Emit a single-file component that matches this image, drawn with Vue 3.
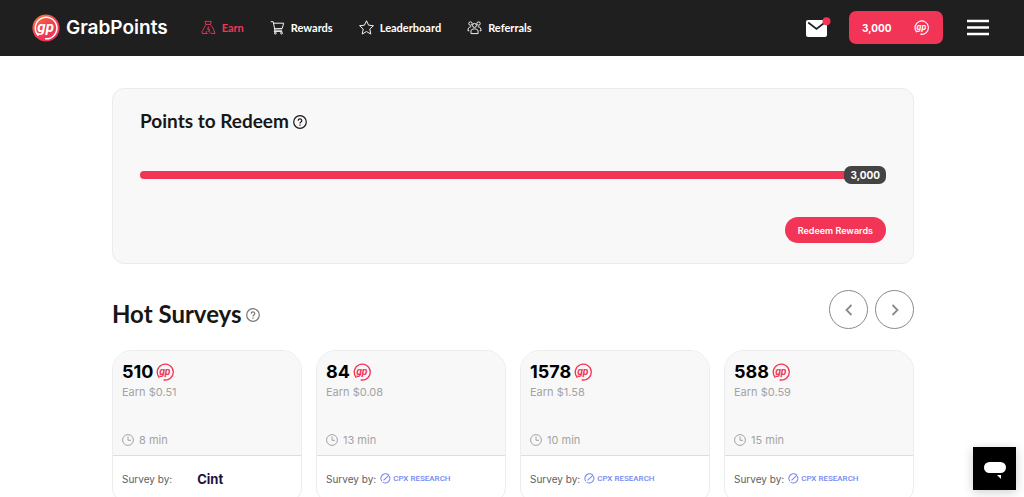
<script setup>
import { h } from 'vue'

const surveys = [
  { points: 510, earn: '$0.51', minutes: 8, provider: 'Cint' },
  { points: 84, earn: '$0.08', minutes: 13, provider: 'CPX RESEARCH' },
  { points: 1578, earn: '$1.58', minutes: 10, provider: 'CPX RESEARCH' },
  { points: 588, earn: '$0.59', minutes: 15, provider: 'CPX RESEARCH' },
]

const balance = 3000
const goal = 3000

// Ring with an opening at the lower left and the italic monogram inside.
const Coin = () =>
  h('svg', { viewBox: '0 0 20 20', 'aria-hidden': 'true' }, [
    h('path', {
      d: 'M3.4 15.8A8.9 8.9 0 1 1 8.6 18.9H10.5',
      fill: 'none',
      stroke: 'currentColor',
      'stroke-width': 1.5,
      'stroke-linecap': 'round',
    }),
    h(
      'text',
      {
        x: 9.8,
        y: 13,
        'text-anchor': 'middle',
        fill: 'currentColor',
        'font-family': 'Roboto, sans-serif',
        'font-size': 11.5,
        'font-weight': 700,
        'font-style': 'italic',
      },
      'gp',
    ),
  ])

const Help = () =>
  h('svg', { viewBox: '0 0 14 14', fill: 'none', stroke: 'currentColor', 'aria-hidden': 'true' }, [
    h('circle', { cx: 7, cy: 7, r: 6.3, 'stroke-width': 1.2 }),
    h('path', {
      d: 'M5.2 5.7C5.2 3.4 8.8 3.4 8.8 5.6 8.8 7 7 6.9 7 8.4M7 9.6v1.1',
      'stroke-width': 1.2,
    }),
  ])
</script>

<template>
  <div class="page">
    <header class="topbar">
      <a class="brand" href="#">
        <svg class="brand-mark" viewBox="0 0 28 28" aria-hidden="true">
          <defs>
            <linearGradient id="brand-fill" x1="0" y1="0" x2="0.6" y2="1">
              <stop offset="0" stop-color="#fb8a3c" />
              <stop offset="0.45" stop-color="#f0484f" />
              <stop offset="1" stop-color="#ee2f5a" />
            </linearGradient>
          </defs>
          <circle cx="14" cy="14" r="13.6" fill="url(#brand-fill)" />
          <path d="M6 21.2A10.8 10.8 0 1 1 13 24.8H16" fill="none" stroke="#fff" stroke-width="1.5" stroke-linecap="round" />
          <text x="13.6" y="17.6" text-anchor="middle" fill="#fff" class="brand-letters">gp</text>
        </svg>
        <span class="brand-name">GrabPoints</span>
      </a>

      <nav class="nav" aria-label="Main">
        <a class="nav-link active" href="#">
          <svg class="nav-icon" viewBox="0 0 16 16" aria-hidden="true">
            <path d="M5.2 4.6 4.2 1.7 6 1.2 7.5 2 9 1.2 11 1.8 10 4.6M5 4.7H10.4M5.2 4.8C4.8 6.8 2.6 8 2.5 10.3M10.2 4.8C10.8 6.4 13.2 8 13.5 10.5L15 14.3H10.6M2.5 10.3 1 12.4 1.4 14.4H7M7.8 7V8.2M9.2 8.4H7.2V10.2H9.2V12H7.2M5.6 11.8V14.3M8.8 14.3 10.4 12.6" />
          </svg>
          <span>Earn</span>
        </a>
        <a class="nav-link" href="#">
          <svg class="nav-icon" viewBox="0 0 16 16" aria-hidden="true">
            <path d="M.8 1.8H3.4L5.2 10.8H13M3.8 3.4H14.6L13 9 5 9.3M5.2 10.8 4.4 12.2H13" />
            <circle cx="5.7" cy="14" r="1" /><circle cx="12.3" cy="14" r="1" />
          </svg>
          <span>Rewards</span>
        </a>
        <a class="nav-link" href="#">
          <svg class="nav-icon" viewBox="0 0 16 16" aria-hidden="true">
            <path d="M8 .8 10.2 5.5 15.4 6.1 11.5 9.6 12.6 15 8 12.3 3.4 15 4.5 9.6.6 6.1 5.8 5.5Z" />
          </svg>
          <span>Leaderboard</span>
        </a>
        <a class="nav-link" href="#">
          <svg class="nav-icon" viewBox="0 0 16 16" aria-hidden="true">
            <circle cx="8" cy="5.8" r="2.1" /><circle cx="3.7" cy="3.8" r="1.8" /><circle cx="12.3" cy="3.8" r="1.8" />
            <path d="M4.2 14.5V11.8C4.2 8.7 11.8 8.7 11.8 11.8V14.5ZM4.5 7.2C2.2 7.2 1 8.5 1 11.5H2.4M11.5 7.2C13.8 7.2 15 8.5 15 11.5H13.6" />
          </svg>
          <span>Referrals</span>
        </a>
      </nav>

      <div class="actions">
        <button class="mail" type="button" aria-label="Messages">
          <svg viewBox="0 0 25 22" aria-hidden="true">
            <rect x="0" y="3" width="21" height="17" rx="2" fill="#fff" />
            <path d="M2.2 5.5 10.5 12 18.8 5.5" fill="none" stroke="#1f1f1f" stroke-width="1.7" />
            <circle cx="20.5" cy="4.2" r="4" fill="#f23557" />
          </svg>
        </button>
        <button class="balance" type="button">
          <span>{{ balance.toLocaleString('en-US') }}</span>
          <Coin class="balance-coin" />
        </button>
        <button class="menu" type="button" aria-label="Menu">
          <svg viewBox="0 0 22 17" aria-hidden="true">
            <path d="M0 2H22M0 8.5H22M0 15H22" stroke="#fff" stroke-width="2.4" />
          </svg>
        </button>
      </div>
    </header>

    <main class="content">
      <section class="redeem">
        <h2 class="redeem-title">Points to Redeem <Help class="help" /></h2>
        <div class="track" role="progressbar" aria-label="Points to redeem" :aria-valuenow="balance" :aria-valuemax="goal">
          <div class="fill" :style="{ width: (balance / goal) * 100 + '%' }">
            <span class="track-value">{{ balance.toLocaleString('en-US') }}</span>
          </div>
        </div>
        <button class="redeem-button" type="button">Redeem Rewards</button>
      </section>

      <section>
        <div class="section-head">
          <h1 class="section-title">Hot Surveys <Help class="help muted" /></h1>
          <div class="arrows">
            <button class="arrow" type="button" aria-label="Previous">
              <svg viewBox="0 0 12 12" aria-hidden="true"><path d="M8.5 1 3.5 6 8.5 11" /></svg>
            </button>
            <button class="arrow" type="button" aria-label="Next">
              <svg viewBox="0 0 12 12" aria-hidden="true"><path d="M3.5 1 8.5 6 3.5 11" /></svg>
            </button>
          </div>
        </div>

        <div class="cards">
          <article v-for="survey in surveys" :key="survey.points" class="card">
            <div class="card-body">
              <h3 class="points">{{ survey.points }} <Coin class="points-coin" /></h3>
              <p class="earn">Earn {{ survey.earn }}</p>
              <p class="time">
                <svg class="clock" viewBox="0 0 12 12" aria-hidden="true">
                  <circle cx="6" cy="6" r="5.4" /><path d="M6 2.5V6.3H9" />
                </svg>
                {{ survey.minutes }} min
              </p>
            </div>
            <footer class="card-foot">
              <span>Survey by:</span>
              <strong v-if="survey.provider === 'Cint'" class="cint">{{ survey.provider }}</strong>
              <span v-else class="cpx">
                <svg class="cpx-mark" viewBox="0 0 12 12" aria-hidden="true">
                  <path d="M10 2.8A5 5 0 0 0 2 9M2.8 9.9A5 5 0 0 0 10.2 3.6M3.8 8 9.4 2.8" />
                </svg>
                {{ survey.provider }}
              </span>
            </footer>
          </article>
        </div>
      </section>
    </main>

    <button class="chat" type="button" aria-label="Open chat">
      <svg viewBox="0 0 43 43" aria-hidden="true">
        <rect x="11" y="15" width="22" height="11" rx="5.5" fill="#fff" />
        <path d="M24 28H28V32Z" fill="#fff" />
      </svg>
    </button>
  </div>
</template>

<style>
body {
  margin: 0;
  background: #fff;
}
</style>

<style scoped>
.page {
  font-family: Inter, "Liberation Sans", sans-serif;
  color: #171717;
}

button {
  padding: 0;
  border: 0;
  background: none;
  font: inherit;
  color: inherit;
  cursor: pointer;
}

svg {
  display: block;
  flex: none;
}

h1,
h2,
h3,
p {
  margin: 0;
}

.topbar {
  display: flex;
  align-items: center;
  box-sizing: border-box;
  height: 56px;
  padding: 0 35px 1px 32px;
  background: #1f1f1f;
  color: #fff;
}

.brand {
  display: flex;
  align-items: center;
  gap: 6px;
  color: #fff;
  text-decoration: none;
}

.brand-mark {
  width: 28px;
  height: 28px;
}

.brand-letters {
  font: italic 700 15px Roboto, sans-serif;
}

.brand-name {
  font-size: 19px;
  font-weight: 600;
  line-height: 24px;
}

.nav {
  display: flex;
  gap: 26px;
  margin-left: 33px;
}

.nav-link {
  display: flex;
  align-items: center;
  gap: 6px;
  color: #fff;
  font-family: Lato, sans-serif;
  font-size: 11px;
  font-weight: 700;
  line-height: 16px;
  text-decoration: none;
}

.nav-link.active {
  color: #f23557;
}

.nav-icon {
  width: 15px;
  height: 15px;
  fill: none;
  stroke: currentColor;
  stroke-width: 1;
  stroke-linejoin: round;
}

.actions {
  display: flex;
  align-items: center;
  margin-left: auto;
}

.mail svg {
  width: 25px;
  height: 22px;
}

.balance {
  display: flex;
  align-items: center;
  justify-content: space-between;
  box-sizing: border-box;
  width: 94px;
  height: 33px;
  margin: 0 24px 0 18px;
  padding: 0 14px 0 13px;
  border-radius: 7px;
  background: #f23557;
  font-size: 10px;
  font-weight: 700;
}

.balance-coin {
  width: 15px;
  height: 15px;
}

.menu svg {
  width: 22px;
  height: 17px;
}

.content {
  margin: 32px 110px 0 112px;
}

.redeem {
  display: flex;
  flex-direction: column;
  padding: 20px 27px 20px;
  border: 1px solid #ececec;
  border-radius: 12px;
  background: #f8f8f8;
}

.redeem-title {
  display: flex;
  align-items: center;
  gap: 4px;
  font-family: Lato, sans-serif;
  font-size: 19px;
  font-weight: 700;
  line-height: 24px;
}

.help {
  width: 14px;
  height: 14px;
  margin-top: 2px;
}

.help.muted {
  color: #777;
}

.track {
  margin-top: 38px;
  border-radius: 4px;
  background: #e4e4e4;
}

.fill {
  display: flex;
  align-items: center;
  justify-content: flex-end;
  height: 8px;
  border-radius: 4px;
  background: #f23557;
}

.track-value {
  padding: 0 6px;
  border-radius: 7px;
  background: #444;
  color: #fff;
  font-size: 10px;
  font-weight: 700;
  line-height: 18px;
}

.redeem-button {
  align-self: flex-end;
  height: 26px;
  margin-top: 38px;
  padding: 0 13px;
  border-radius: 13px;
  background: #f23557;
  color: #fff;
  font-size: 9px;
  font-weight: 600;
}

.section-head {
  display: flex;
  align-items: center;
  justify-content: space-between;
  margin-top: 26px;
}

.section-title {
  display: flex;
  align-items: center;
  gap: 4px;
  padding-top: 8px;
  font-family: Lato, sans-serif;
  font-size: 24px;
  font-weight: 700;
  line-height: 30px;
}

.arrows {
  display: flex;
  gap: 7px;
}

.arrow {
  display: grid;
  place-items: center;
  box-sizing: border-box;
  width: 39px;
  height: 39px;
  border: 1px solid #8a8a8a;
  border-radius: 50%;
  color: #8a8a8a;
}

.arrow svg {
  width: 12px;
  height: 12px;
  fill: none;
  stroke: currentColor;
  stroke-width: 1.8;
}

.cards {
  display: grid;
  grid-template-columns: repeat(4, 1fr);
  gap: 14px;
  margin-top: 21px;
}

.card {
  border: 1px solid #ececec;
  border-radius: 20px 20px 14px 14px;
  overflow: hidden;
}

.card-body {
  padding: 9px 9px 7px;
  border-bottom: 1px solid #dedede;
  background: #f8f8f8;
}

.points {
  display: flex;
  align-items: center;
  gap: 3px;
  color: #000;
  font-size: 18px;
  font-weight: 700;
  line-height: 24px;
}

.points-coin {
  width: 18px;
  height: 18px;
  color: #f23557;
}

.earn,
.time {
  color: #a3a3a3;
  font-size: 11px;
  line-height: 16px;
}

.time {
  display: flex;
  align-items: center;
  gap: 5px;
  margin-top: 32px;
}

.clock {
  width: 12px;
  height: 12px;
  fill: none;
  stroke: currentColor;
  stroke-width: 1;
}

.card-foot {
  display: flex;
  align-items: center;
  height: 45px;
  padding: 0 9px;
  color: #606060;
  font-size: 10px;
}

.cint {
  margin-left: 25px;
  color: #21113d;
  font-size: 13px;
  font-weight: 700;
}

.cpx {
  display: flex;
  align-items: center;
  gap: 2px;
  margin-left: 4px;
  color: #7587f3;
  font-family: Roboto, sans-serif;
  font-size: 8px;
  font-weight: 500;
}

.cpx-mark {
  width: 11px;
  height: 11px;
  fill: none;
  stroke: currentColor;
  stroke-width: 1.1;
}

.chat {
  position: fixed;
  right: 8px;
  bottom: 7px;
  width: 43px;
  height: 43px;
  background: #000;
  box-shadow: 0 2px 10px rgba(0, 0, 0, 0.2);
}
</style>
